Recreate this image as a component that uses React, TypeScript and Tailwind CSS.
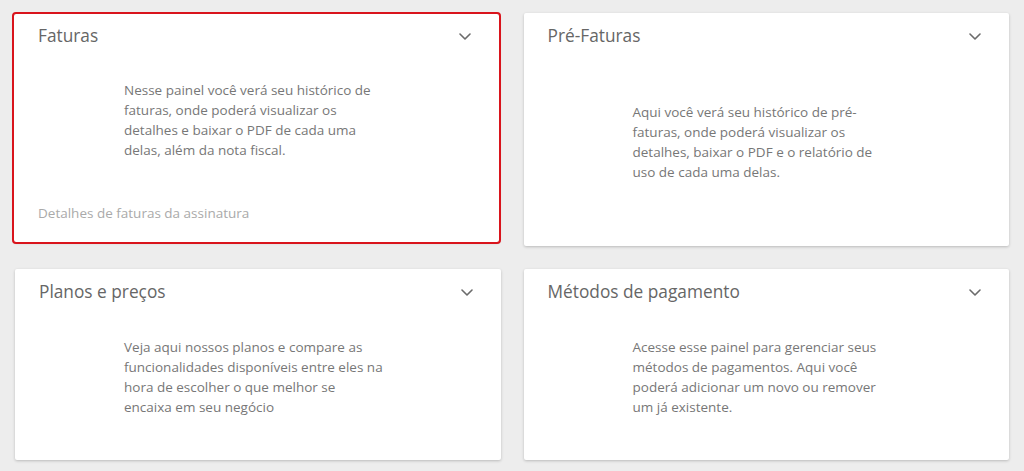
import React from "react";

const font = { fontFamily: '"Open Sans", "Liberation Sans", sans-serif' };

function Chevron() {
  return (
    <svg width="12" height="7" viewBox="0 0 12 7" fill="none" className="mr-[28px] shrink-0">
      <polyline points="1,1 6,6 11,1" stroke="#6b6b6b" strokeWidth="1.6" strokeLinecap="round" strokeLinejoin="round" />
    </svg>
  );
}

function Card({ title, text }: { title: string; text: string }) {
  return (
    <div className="flex flex-col bg-white rounded-[2px] shadow-[0_1px_3px_rgba(0,0,0,0.22)] pb-[21px]">
      <div className="flex h-[46px] items-center justify-between pl-6">
        <h2 className="text-[17.3px] leading-6 text-[#666]">{title}</h2>
        <Chevron />
      </div>
      <div className="flex flex-1 items-center pl-[109px] py-[22px]">
        <p className="w-[262px] text-[13.5px] leading-5 text-[#777]">{text}</p>
      </div>
    </div>
  );
}

export default function App() {
  return (
    <div className="min-h-[471px] w-full bg-[#ededed]" style={font}>
      <div className="grid grid-cols-2 gap-[23px] px-[15px] pt-[13px]">
        <div className="-ml-[1px] mr-[2px] mt-[1px] mb-[4px] flex flex-col bg-white rounded-[2px] outline-2 outline-[#d9141c] shadow-[0_1px_3px_rgba(0,0,0,0.22)] pb-[19px]">
          <div className="flex h-[44px] items-center justify-between pl-6">
            <h2 className="text-[17.3px] leading-6 text-[#666]">Faturas</h2>
            <Chevron />
          </div>
          <div className="flex pl-[110px] pt-[22px]">
            <p className="w-[262px] text-[13.5px] leading-5 text-[#777]">
              Nesse painel você verá seu histórico de faturas, onde poderá visualizar os detalhes e baixar o PDF de cada uma delas, além da nota fiscal.
            </p>
          </div>
          <div className="mt-[43px] pl-6 text-[13.5px] leading-5 text-[#aaa]">Detalhes de faturas da assinatura</div>
        </div>
        <Card
          title="Pré-Faturas"
          text="Aqui você verá seu histórico de pré-faturas, onde poderá visualizar os detalhes, baixar o PDF e o relatório de uso de cada uma delas."
        />
        <Card
          title="Planos e preços"
          text="Veja aqui nossos planos e compare as funcionalidades disponíveis entre eles na hora de escolher o que melhor se encaixa em seu negócio"
        />
        <Card
          title="Métodos de pagamento"
          text="Acesse esse painel para gerenciar seus métodos de pagamentos. Aqui você poderá adicionar um novo ou remover um já existente."
        />
      </div>
    </div>
  );
}
